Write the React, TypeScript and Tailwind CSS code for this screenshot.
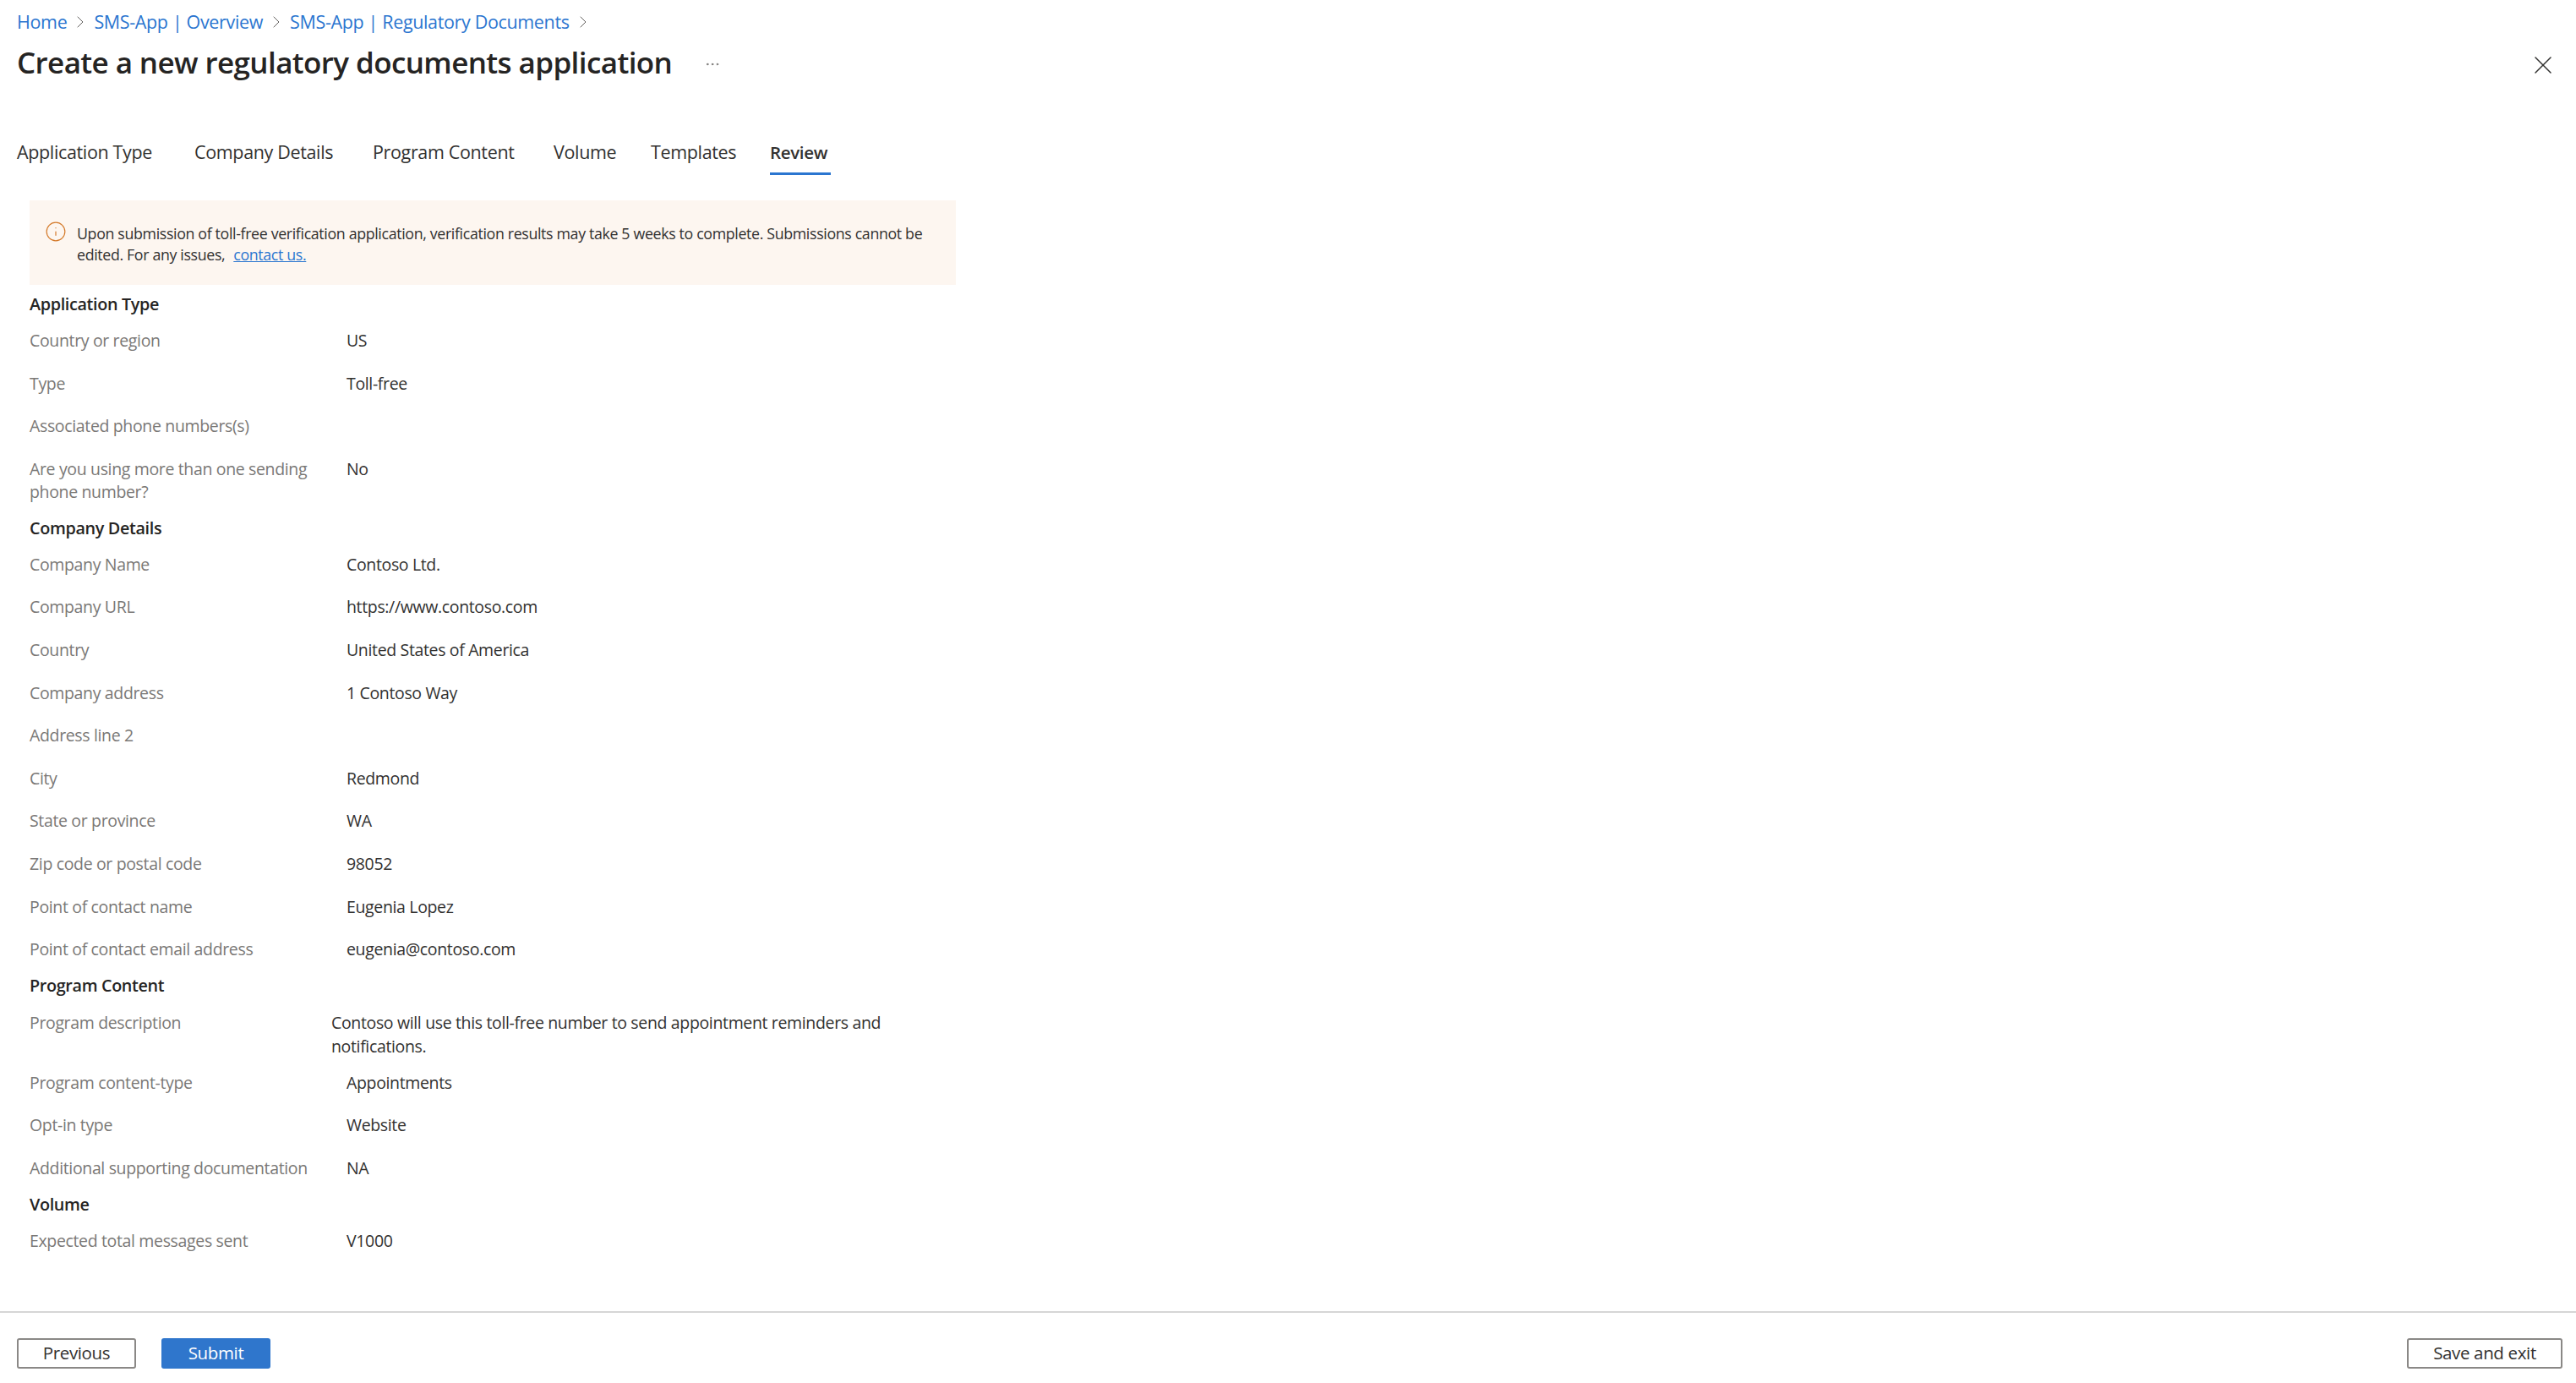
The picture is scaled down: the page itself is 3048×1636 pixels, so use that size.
import React from 'react';
import { ChevronRight, X, Info, MoreHorizontal } from 'lucide-react';

const tabs = [
  { label: 'Application Type', cls: 'w-[210px]' },
  { label: 'Company Details', cls: 'w-[211px]' },
  { label: 'Program Content', cls: 'w-[214px]' },
  { label: 'Volume', cls: 'w-[115px]' },
  { label: 'Templates', cls: 'w-[141px]' },
];

function Row({ label, value }: { label: string; value?: string }) {
  return (
    <div className="flex h-[50.6px] pt-[14px] leading-[26px]">
      <div className="w-[375px] text-[#7a7876]">{label}</div>
      <div className="text-[#323130]">{value}</div>
    </div>
  );
}

function Heading({ children }: { children: React.ReactNode }) {
  return <div className="h-[35px] pt-[6px] leading-[26px] text-[19.8px] font-semibold text-[#252423]">{children}</div>;
}

export default function App() {
  return (
    <div className="h-screen flex flex-col bg-white text-[19.5px] font-['Open_Sans',sans-serif] tracking-[-0.35px] overflow-hidden">
      <div className="flex-1 min-h-0">
        <div className="flex items-center h-[26px] mt-[13px] pl-[20px] text-[21.5px] text-[#2b76d0]">
          <span>Home</span>
          <ChevronRight size={24} strokeWidth={1} className="mx-[4px] text-[#605e5c]" />
          <span>SMS-App | Overview</span>
          <ChevronRight size={24} strokeWidth={1} className="mx-[4px] text-[#605e5c]" />
          <span>SMS-App | Regulatory Documents</span>
          <ChevronRight size={24} strokeWidth={1} className="mx-[4px] text-[#605e5c]" />
        </div>
        <div className="flex items-center justify-between h-[50px] mt-[10px] pl-[20px] pr-[21px]">
          <div className="flex items-center">
            <h1 className="text-[35px] font-semibold text-[#252423] tracking-[-0.6px] leading-[50px]">
              Create a new regulatory documents application
            </h1>
            <MoreHorizontal size={20} strokeWidth={1} className="ml-[38px] mt-[4px] text-[#605e5c]" />
          </div>
          <X size={36} strokeWidth={1} className="mt-[6px] text-[#323130]" />
        </div>
        <div className="flex h-[55px] mt-[53px] pl-[20px] text-[21.5px] text-[#323130]">
          {tabs.map((t) => (
            <div key={t.label} className={`${t.cls} pt-[14px] leading-[28px]`}>{t.label}</div>
          ))}
          <div className="h-[55px] pt-[14px] leading-[28px] font-semibold text-[#323130] border-b-[3px] border-[#2b76d0] w-[72px] text-[20.5px]">
            Review
          </div>
        </div>

        <div className="ml-[35px] mt-[30px] w-[1096px]">
          <div className="flex h-[100px] bg-[#fdf6f0] pl-[18px] pt-[27px] text-[17.8px] leading-[25px] text-[#323130]">
            <Info size={26} strokeWidth={1.1} className="shrink-0 mr-[12px] mt-[-3px] text-[#d47a2a]" />
            <div>
              <div className="whitespace-nowrap">
                Upon submission of toll-free verification application, verification results may take 5 weeks to complete. Submissions cannot be
              </div>
              <div className="flex gap-[10px]">
                <span>edited. For any issues,</span>
                <span className="text-[#2b76d0] underline">contact us.</span>
              </div>
            </div>
          </div>

          <div className="mt-[4px]">
            <Heading>Application Type</Heading>
            <Row label="Country or region" value="US" />
            <Row label="Type" value="Toll-free" />
            <Row label="Associated phone numbers(s)" />
            <div className="flex h-[78px] pt-[13px] leading-[27px]">
              <div className="w-[375px] pr-[20px] text-[#7a7876]">Are you using more than one sending phone number?</div>
              <div className="text-[#323130]">No</div>
            </div>

            <Heading>Company Details</Heading>
            <Row label="Company Name" value="Contoso Ltd." />
            <Row label="Company URL" value="https://www.contoso.com" />
            <Row label="Country" value="United States of America" />
            <Row label="Company address" value="1 Contoso Way" />
            <Row label="Address line 2" />
            <Row label="City" value="Redmond" />
            <Row label="State or province" value="WA" />
            <Row label="Zip code or postal code" value="98052" />
            <Row label="Point of contact name" value="Eugenia Lopez" />
            <Row label="Point of contact email address" value="eugenia@contoso.com" />

            <Heading>Program Content</Heading>
            <div className="flex h-[72px] pt-[14px] leading-[28px]">
              <div className="w-[357px] text-[#7a7876]">Program description</div>
              <div className="w-[690px] text-[#323130]">
                Contoso will use this toll-free number to send appointment reminders and notifications.
              </div>
            </div>
            <Row label="Program content-type" value="Appointments" />
            <Row label="Opt-in type" value="Website" />
            <Row label="Additional supporting documentation" value="NA" />

            <Heading>Volume</Heading>
            <Row label="Expected total messages sent" value="V1000" />
          </div>
        </div>
      </div>

      <div className="h-[85px] border-t-2 border-[#d6d6d6] flex items-start justify-between pt-[30px] pl-[20px] pr-[16px] text-[20.5px] font-medium">
        <div className="flex gap-[30px]">
          <button className="w-[141px] h-[36px] pb-[1px] border-2 border-[#8a8886] rounded-[3px] text-[#323130] flex items-center justify-center">
            Previous
          </button>
          <button className="w-[129px] h-[36px] pb-[1px] bg-[#2f76cc] rounded-[3px] text-white flex items-center justify-center">
            Submit
          </button>
        </div>
        <button className="w-[184px] h-[36px] pb-[1px] border-2 border-[#8a8886] rounded-[3px] text-[#323130] flex items-center justify-center">
          Save and exit
        </button>
      </div>
    </div>
  );
}
